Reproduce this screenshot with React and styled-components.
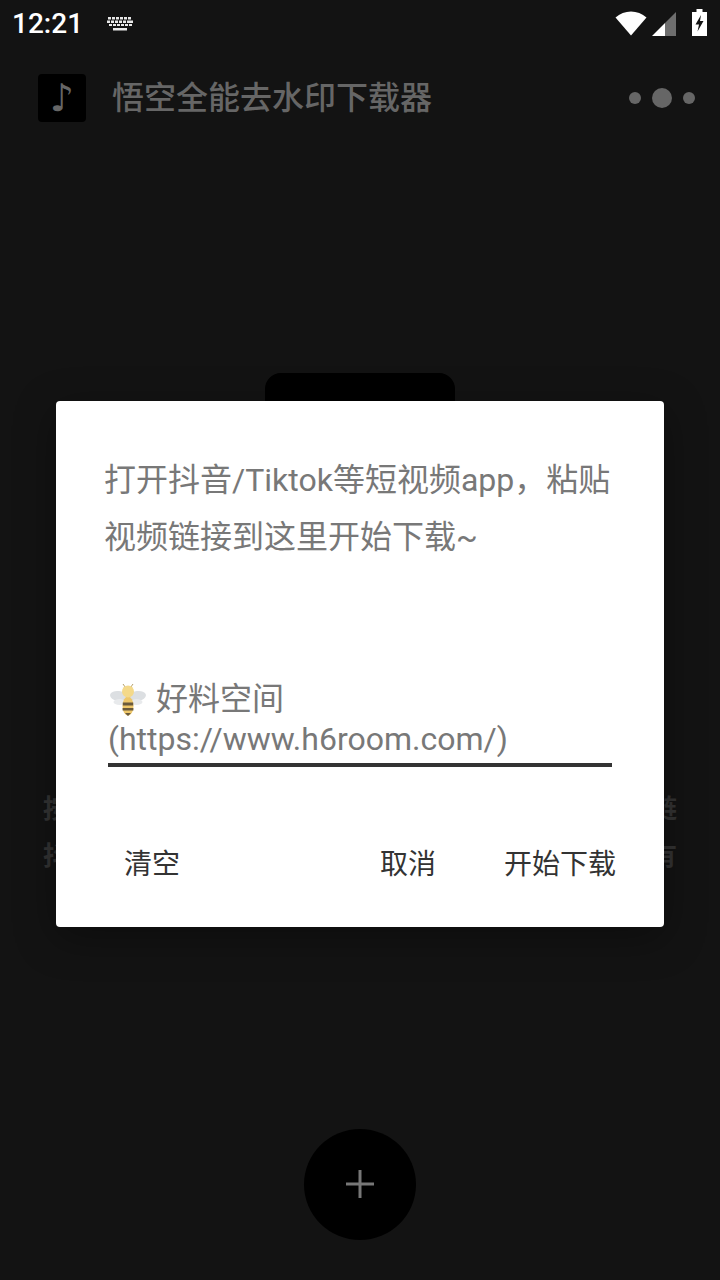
import React from 'react'
import styled, {createGlobalStyle} from 'styled-components'

const GlobalStyle = createGlobalStyle`
    html, body {
        margin: 0;
        padding: 0;
        background: #131313;
    }

    * {
        box-sizing: border-box;
    }
`

const FONT = `Roboto, "Noto Sans CJK SC", "Noto Sans", sans-serif`

const Page = styled.div`
    position: relative;
    display: flex;
    flex-direction: column;
    width: 720px;
    height: 1280px;
    overflow: hidden;
    background: #131313;
    font-family: ${FONT};
`

const StatusBar = styled.div`
    display: flex;
    align-items: center;
    flex: none;
    height: 48px;
    padding: 0 13px 0 12px;
`

const Clock = styled.span`
    color: #fff;
    font-size: 28px;
    font-weight: 500;
    line-height: 50px;
`

const KeyboardIcon = styled.svg`
    display: block;
    margin-left: 24px;
`

const StatusIcons = styled.div`
    display: flex;
    align-items: center;
    margin-left: auto;
`

const WifiIcon = styled.svg`
    display: block;
    margin: 0 5px 1px 0;
`

const BatteryIcon = styled.svg`
    display: block;
    margin: 0 0 3px 16px;
`

const Toolbar = styled.header`
    display: flex;
    align-items: center;
    flex: none;
    height: 100px;
    padding: 0 25px 0 38px;
`

const AppIcon = styled.div`
    display: flex;
    align-items: center;
    justify-content: center;
    width: 48px;
    height: 48px;
    background: #000;
    border-radius: 4px;
    color: #666;
    font-family: "DejaVu Sans", sans-serif;
    font-size: 38px;
    line-height: 48px;
`

const AppTitle = styled.h1`
    margin: 0 0 0 26px;
    color: #666;
    font-size: 32px;
    font-weight: 500;
    line-height: 48px;
`

const Dots = styled.div`
    display: flex;
    align-items: center;
    gap: 11px;
    margin-left: auto;
`

const Dot = styled.span`
    width: ${({$size}) => $size}px;
    height: ${({$size}) => $size}px;
    background: #666;
    border-radius: 50%;
`

const Content = styled.main`
    display: flex;
    flex: 1;
    flex-direction: column;
    align-items: center;
    padding-top: 225px;
`

const Cover = styled.div`
    flex: none;
    width: 190px;
    height: 190px;
    background: #000;
    border-radius: 16px;
`

const Hint = styled.div`
    width: 634px;
    margin-top: 223px;
    color: #333;
    font-size: 26px;
    font-weight: 700;
    line-height: 47px;
`

const HintLine = styled.div`
    display: flex;
    justify-content: space-between;
`

const Fab = styled.button`
    position: absolute;
    left: 304px;
    top: 1129px;
    display: flex;
    align-items: center;
    justify-content: center;
    width: 112px;
    height: 111px;
    padding: 0;
    background: #000;
    border: 0;
    border-radius: 50%;
`

const Dialog = styled.section`
    position: absolute;
    left: 56px;
    top: 401px;
    display: flex;
    flex-direction: column;
    width: 608px;
    height: 526px;
    padding: 51px 52px 0 48px;
    background: #fff;
    border-radius: 4px;
    box-shadow: 0 10px 40px rgba(0, 0, 0, 0.35);
`

const Message = styled.p`
    margin: 0;
    color: #787878;
    font-size: 32px;
    line-height: 57px;
`

const Field = styled.div`
    margin: 112px 0 0 4px;
    padding-bottom: 3px;
    border-bottom: 4px solid #333;
    color: #787878;
    font-size: 32px;
`

const FieldLine = styled.div`
    display: flex;
    align-items: center;
    height: 41px;
    padding-bottom: ${({$cjk}) => ($cjk ? '4px' : '0')};
    font-family: ${({$cjk}) => ($cjk ? `"Noto Sans CJK SC", sans-serif` : FONT)};
    line-height: 41px;
`

const Bee = styled.svg`
    display: block;
    flex: none;
    margin: 5px 10px 0 2px;
`

const Actions = styled.div`
    display: flex;
    align-items: center;
    margin: 78px -4px 0 20px;
`

const ActionButton = styled.button`
    margin-left: ${({$push}) => ($push ? 'auto' : '0')};
    margin-right: ${({$gap}) => $gap || 0}px;
    padding: 0;
    background: none;
    border: 0;
    color: #333;
    font-family: ${FONT};
    font-size: 28px;
    line-height: 40px;
`

const Keyboard = () => (
    <KeyboardIcon width="26" height="14" viewBox="0 0 26 14" fill="#e8e8e8">
        {[1, 5, 9, 13, 17, 21].map(x => <rect key={x} x={x} y="0" width="3" height="2.5"/>)}
        {[0, 4, 8, 12, 16, 20, 23].map(x => <rect key={x} x={x} y="3.5" width="3" height="2.5"/>)}
        {[2, 6, 10, 14, 18, 22].map(x => <rect key={x} x={x} y="7" width="3" height="2"/>)}
        <rect x="6" y="11" width="14" height="2.5"/>
    </KeyboardIcon>
)

const Wifi = () => (
    <WifiIcon width="32" height="25" viewBox="0 0 32 25">
        <path d="M0.5 6.5C9 -1.5 23 -1.5 31.5 6.5L16 24.5Z" fill="#fff"/>
    </WifiIcon>
)

const Signal = () => (
    <svg width="24" height="24" viewBox="0 0 24 24">
        <path d="M0 24L13 11V24Z" fill="#fff"/>
        <path d="M13 11L24 0V24H13Z" fill="#6e6e6e"/>
    </svg>
)

const Battery = () => (
    <BatteryIcon width="15" height="27" viewBox="0 0 15 27">
        <path d="M4.5 0H10.5V3H15V27H0V3H4.5Z" fill="#fff"/>
        <path d="M9 6L3.5 15.5H7L5.5 22.5L11.5 12H8Z" fill="#131313"/>
    </BatteryIcon>
)

const BeeIcon = () => (
    <Bee width="36" height="34" viewBox="0 0 36 34">
        <ellipse cx="8.5" cy="14" rx="8.5" ry="5" fill="#dcdfe2" transform="rotate(8 8.5 14)"/>
        <ellipse cx="27.5" cy="14" rx="8.5" ry="5" fill="#dcdfe2" transform="rotate(-8 27.5 14)"/>
        <ellipse cx="9.5" cy="20" rx="6" ry="3" fill="#e8eaec"/>
        <ellipse cx="26.5" cy="20" rx="6" ry="3" fill="#e8eaec"/>
        <path d="M13 2L15.5 5.5M23 2L20.5 5.5" stroke="#b5a06a" strokeWidth="1"/>
        <ellipse cx="18" cy="24" rx="5.5" ry="9.5" fill="#eec76a"/>
        <path d="M12.8 20.5H23.2V23.5H12.8ZM12.6 26H23.4V28.5H12.6ZM15 31H21L18 34Z" fill="#6a5a3c"/>
        <circle cx="18" cy="9.5" r="6" fill="#f4d98a"/>
    </Bee>
)

export default function App() {
    return (
        <Page>
            <GlobalStyle/>
            <StatusBar>
                <Clock>12:21</Clock>
                <Keyboard/>
                <StatusIcons>
                    <Wifi/>
                    <Signal/>
                    <Battery/>
                </StatusIcons>
            </StatusBar>
            <Toolbar>
                <AppIcon>♪</AppIcon>
                <AppTitle>悟空全能去水印下载器</AppTitle>
                <Dots>
                    <Dot $size={12}/>
                    <Dot $size={20}/>
                    <Dot $size={12}/>
                </Dots>
            </Toolbar>
            <Content>
                <Cover/>
                {/* only the ends of these lines show past the dialog */}
                <Hint>
                    <HintLine><span>按</span><span>链</span></HintLine>
                    <HintLine><span>抖</span><span>有</span></HintLine>
                </Hint>
            </Content>
            <Fab aria-label="add">
                <svg width="30" height="30" viewBox="0 1 30 30">
                    <path d="M15 1V29M1 15H29" stroke="#777" strokeWidth="3"/>
                </svg>
            </Fab>
            <Dialog>
                <Message>打开抖音/Tiktok等短视频app，粘贴视频链接到这里开始下载~</Message>
                <Field>
                    <FieldLine $cjk><BeeIcon/>好料空间</FieldLine>
                    <FieldLine>(https://www.h6room.com/)</FieldLine>
                </Field>
                <Actions>
                    <ActionButton>清空</ActionButton>
                    <ActionButton $push $gap={68}>取消</ActionButton>
                    <ActionButton>开始下载</ActionButton>
                </Actions>
            </Dialog>
        </Page>
    )
}
